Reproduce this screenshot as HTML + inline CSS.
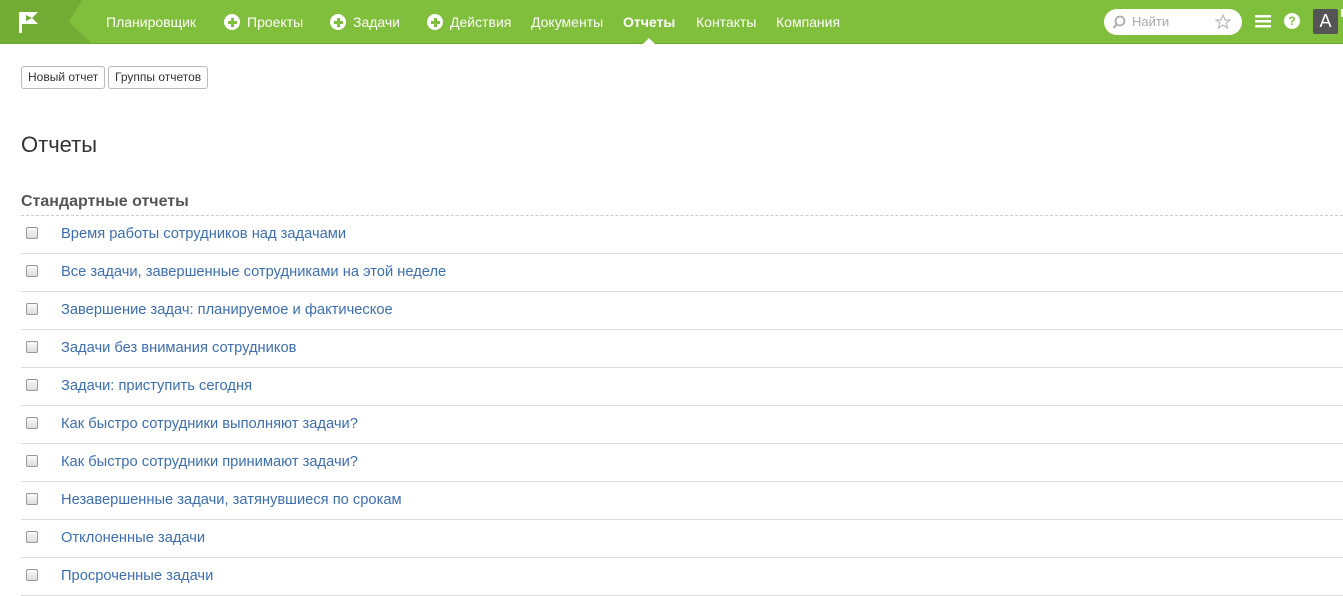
<!DOCTYPE html>
<html><head><meta charset="utf-8"><style>
*{margin:0;padding:0;box-sizing:border-box}
body{width:1343px;height:588px;overflow:hidden;background:#fff;font-family:"Liberation Sans",Arial,sans-serif;color:#333;position:relative}
.nav{position:absolute;left:0;top:0;width:1343px;height:44px;background:#80bf3b;border-bottom:1px solid #6da530}
.logo{position:absolute;left:0;top:0;width:90px;height:43px;background:#72ac35;clip-path:polygon(0 0,82px 0,69px 21.5px,91px 43px,0 43px)}
.nav a{position:absolute;top:14px;color:#fff;font-size:14px;text-decoration:none;white-space:nowrap}
.plus{display:inline-block;width:16px;height:16px;border-radius:50%;background:#fff;position:relative;vertical-align:-3px;margin-right:7px}
.plus:before{content:"";position:absolute;left:3.5px;top:7px;width:9px;height:2.5px;background:#80bf3b}
.plus:after{content:"";position:absolute;left:7px;top:3.5px;width:2.5px;height:9px;background:#80bf3b}
.search{position:absolute;left:1104px;top:9px;width:138px;height:26px;background:#fff;border-radius:13px}
.btn{position:absolute;top:66px;height:23px;border:1px solid #bbb;border-radius:3px;font-size:12px;line-height:21px;padding:0 6px;color:#333;background:#fff}
h1{position:absolute;left:21px;top:132px;font-size:22px;font-weight:normal;color:#333}
h2{position:absolute;left:21px;top:193px;font-size:16px;font-weight:bold;color:#555}
.dash{position:absolute;left:21px;top:215px;width:1322px;border-top:1px dashed #ccc}
.row{position:absolute;left:21px;width:1322px;height:38px;border-bottom:1px solid #ddd}
.row i{position:absolute;left:5px;top:11px;width:12px;height:12px;border:1px solid #999;border-radius:2px;background:linear-gradient(#fafafa,#ddd)}
.row span{position:absolute;left:40px;top:10px;font-size:14.7px;color:#3d6fb0}
</style></head><body>
<div class="nav">
<div class="logo"></div>
<svg style="position:absolute;left:18px;top:11px" width="22" height="23" viewBox="0 0 22 23"><path d="M1 1h3v21H1z M4 1h16l-6 6 6 6H4z M8 4v6l6-3z" fill="#fff" fill-rule="evenodd"/></svg>
<a style="left:106px">Планировщик</a>
<a style="left:224px"><span class="plus"></span>Проекты</a>
<a style="left:330px"><span class="plus"></span>Задачи</a>
<a style="left:427px"><span class="plus"></span>Действия</a>
<a style="left:531px">Документы</a>
<a style="left:623px;font-weight:bold">Отчеты</a>
<a style="left:696px">Контакты</a>
<a style="left:776px">Компания</a>
<div style="position:absolute;left:643px;top:38px;width:0;height:0;border-left:6px solid transparent;border-right:6px solid transparent;border-bottom:6px solid #fff"></div>
<div class="search">
<svg style="position:absolute;left:8px;top:6px" width="14" height="15"><circle cx="8" cy="6" r="4.5" stroke="#aaa" stroke-width="1.7" fill="none"/><path d="M5 9L1.5 13" stroke="#aaa" stroke-width="2"/></svg>
<span style="position:absolute;left:28px;top:5px;font-size:13px;color:#aaa">Найти</span>
<svg style="position:absolute;left:111px;top:5px" width="16" height="16" viewBox="0 0 16 16"><path d="M8 1l2 5h5l-4 3 1.5 5L8 11l-4.5 3L5 9 1 6h5z" fill="none" stroke="#bbb" stroke-width="1.2"/></svg>
</div>
<svg style="position:absolute;left:1255px;top:14px" width="16" height="14"><rect y="1" width="16" height="2.5" fill="#fff"/><rect y="6" width="16" height="2.5" fill="#fff"/><rect y="11" width="16" height="2.5" fill="#fff"/></svg>
<div style="position:absolute;left:1284px;top:13px;width:16px;height:16px;border-radius:50%;background:#fff;color:#80bf3b;font-weight:bold;font-size:12px;text-align:center;line-height:16px">?</div>
<div style="position:absolute;left:1313px;top:9px;width:25px;height:25px;background:#555;border-radius:2px;color:#fff;font-size:18px;text-align:center;line-height:25px">A</div>
<div style="position:absolute;left:1341px;top:9px;width:2px;height:8px;background:#fff"></div>
</div>
<div class="btn" style="left:21px">Новый отчет</div>
<div class="btn" style="left:108px">Группы отчетов</div>
<h1>Отчеты</h1>
<h2>Стандартные отчеты</h2>
<div class="dash"></div>
<div class="row" style="top:216px"><i></i><span>Время работы сотрудников над задачами</span></div>
<div class="row" style="top:254px"><i></i><span>Все задачи, завершенные сотрудниками на этой неделе</span></div>
<div class="row" style="top:292px"><i></i><span>Завершение задач: планируемое и фактическое</span></div>
<div class="row" style="top:330px"><i></i><span>Задачи без внимания сотрудников</span></div>
<div class="row" style="top:368px"><i></i><span>Задачи: приступить сегодня</span></div>
<div class="row" style="top:406px"><i></i><span>Как быстро сотрудники выполняют задачи?</span></div>
<div class="row" style="top:444px"><i></i><span>Как быстро сотрудники принимают задачи?</span></div>
<div class="row" style="top:482px"><i></i><span>Незавершенные задачи, затянувшиеся по срокам</span></div>
<div class="row" style="top:520px"><i></i><span>Отклоненные задачи</span></div>
<div class="row" style="top:558px"><i></i><span>Просроченные задачи</span></div>
</body></html>
